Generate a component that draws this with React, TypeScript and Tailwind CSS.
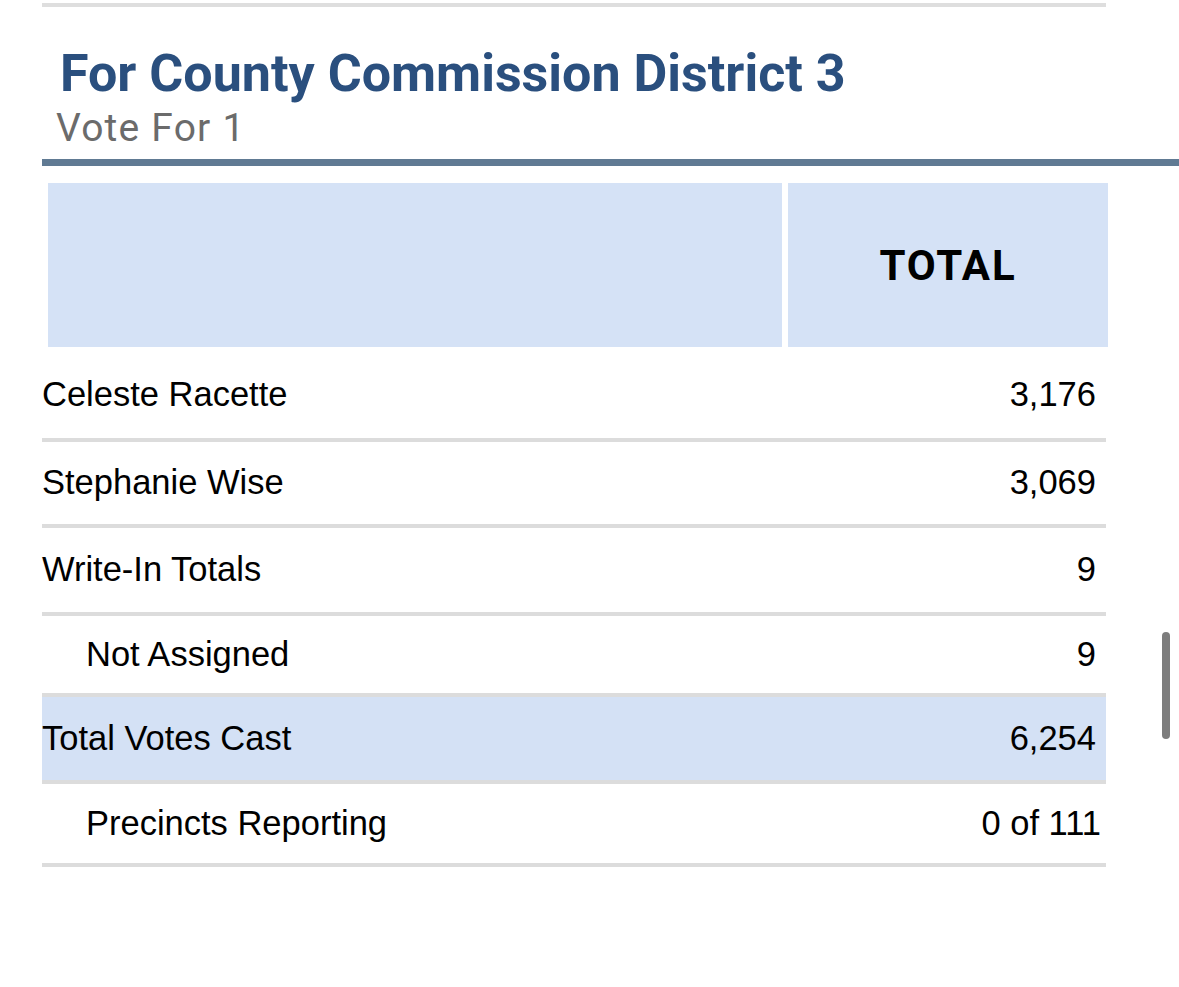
const rows = [
  { name: "Celeste Racette", votes: "3,176", h: "h-[90px]" },
  { name: "Stephanie Wise", votes: "3,069", h: "h-[86px]" },
  { name: "Write-In Totals", votes: "9", h: "h-[88px]" },
];

export default function App() {
  return (
    <div className="relative w-[1179px] h-[987px] overflow-hidden bg-white font-['Liberation_Sans',Arial,sans-serif] text-black">
      <div className="ml-[42px] mt-[3px] w-[1064px] h-[4px] bg-[#dedede]" />

      {/* contest heading */}
      <div className="font-['Roboto',sans-serif]">
        <h2 className="pl-[60px] mt-[41px] text-[52px] leading-[52px] font-bold text-[#2a4f7e] whitespace-nowrap">
          For County Commission District 3
        </h2>
        <p className="pl-[56px] mt-[9px] text-[39px] leading-[39px] tracking-[1.2px] text-[#6b6b6b]">Vote For 1</p>
      </div>
      <div className="ml-[42px] mt-[11px] h-[7px] bg-[#607a93]" />

      {/* results table */}
      <div className="ml-[42px] mt-[17px] w-[1064px]">
        <div className="ml-[6px] flex gap-[6px] h-[164px] w-[1060px]">
          <div className="w-[734px] bg-[#d5e2f6]" />
          <div className="flex-1 flex items-center justify-center bg-[#d5e2f6] font-['Roboto',sans-serif] font-bold text-[42px] tracking-[1.8px]">
            TOTAL
          </div>
        </div>
        <div className="h-[5px]" />

        {rows.map((r) => (
          <div key={r.name} className={`flex items-center justify-between border-b-4 border-[#dcdcdc] text-[34.5px] ${r.h}`}>
            <span>{r.name}</span>
            <span className="pr-[10px]">{r.votes}</span>
          </div>
        ))}

        <div className="flex items-center justify-between h-[81px] border-b-4 border-[#dcdcdc] text-[34.5px]">
          <span className="pl-[44px]">Not Assigned</span>
          <span className="pr-[10px]">9</span>
        </div>

        <div className="flex items-center justify-between h-[87px] bg-[#d4e1f5] border-b-4 border-[#dcdcdc] text-[34.5px]">
          <span>Total Votes Cast</span>
          <span className="pr-[10px]">6,254</span>
        </div>

        <div className="flex items-center justify-between h-[83px] border-b-4 border-[#dcdcdc] text-[34.5px]">
          <span className="pl-[44px]">Precincts Reporting</span>
          <span className="pr-[5px]">0 of 111</span>
        </div>
      </div>

      {/* scroll indicator */}
      <div className="absolute left-[1162px] top-[632px] w-[8px] h-[107px] rounded-full bg-[#7d7d7d]" />
    </div>
  );
}
